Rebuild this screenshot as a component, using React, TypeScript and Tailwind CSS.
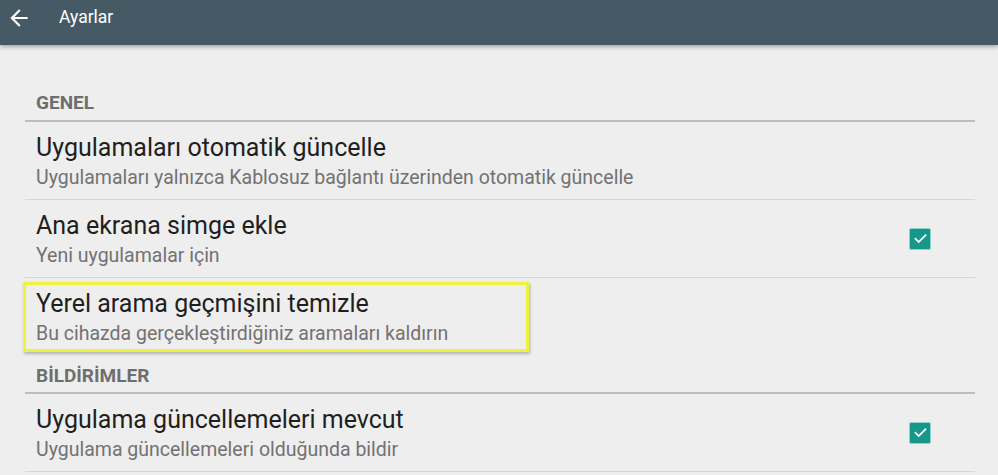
import React from "react";

function Check() {
  return (
    <div className="w-[22px] h-[22px] rounded-[2px] bg-[#17968a] border border-[#8fd0c8] flex items-center justify-center">
      <svg width="17" height="17" viewBox="0 0 24 24">
        <path d="M5 12.5l4.5 4.5L19 7.5" fill="none" stroke="white" strokeWidth="2.6" strokeLinecap="square" />
      </svg>
    </div>
  );
}

function Item({ title, sub, check, divider = true, highlight = false }: { title: string; sub: string; check?: boolean; divider?: boolean; highlight?: boolean }) {
  return (
    <div className={"relative flex items-center " + (divider ? "border-b border-[#d6d6d6]" : "")}>
      <div className="flex-1 pl-[11px] pt-[12px] pb-[10px]">
        <div className="text-[25px] leading-[28px] text-[#1f1f1f]">{title}</div>
        <div className="mt-[5px] text-[19.5px] leading-[22px] text-[#727272]">{sub}</div>
      </div>
      {check && (
        <div className="pr-[44px]">
          <Check />
        </div>
      )}
      {highlight && (
        <div className="absolute left-[-2px] top-[4px] w-[506px] h-[70px] border-[3px] border-[#eef23a] shadow-[1px_2px_3px_rgba(0,0,0,0.25)] pointer-events-none" />
      )}
    </div>
  );
}

function Section({ label, first }: { label: string; first?: boolean }) {
  return (
    <div className={"border-b-2 border-[#bdbdbd] pl-[11px] " + (first ? "pt-[47px] pb-[6px]" : "pt-[10px] pb-[5px]")}>
      <div className="text-[19px] leading-[22px] font-bold text-[#6e6e6e]">{label}</div>
    </div>
  );
}

export default function App() {
  return (
    <div className="w-[998px] h-[475px] overflow-hidden bg-[#eeeeee]" style={{ fontFamily: "Roboto, 'Noto Sans', sans-serif" }}>
      <div className="relative z-10 h-[45px] bg-[#455a64] shadow-[0_2px_4px_rgba(0,0,0,0.3)]">
        <div className="h-[35px] flex items-center">
          <svg className="ml-[6px]" width="26" height="26" viewBox="0 0 24 24">
            <path d="M20 11H7.83l5.59-5.59L12 4l-8 8 8 8 1.41-1.41L7.83 13H20v-2z" fill="white" />
          </svg>
          <span className="ml-[27px] text-[17.5px] text-white">Ayarlar</span>
        </div>
      </div>
      <div className="pl-[25px] pr-[23px]">
        <Section label="GENEL" first />
        <Item title="Uygulamaları otomatik güncelle" sub="Uygulamaları yalnızca Kablosuz bağlantı üzerinden otomatik güncelle" />
        <Item title="Ana ekrana simge ekle" sub="Yeni uygulamalar için" check />
        <Item title="Yerel arama geçmişini temizle" sub="Bu cihazda gerçekleştirdiğiniz aramaları kaldırın" divider={false} highlight />
        <Section label="BİLDİRİMLER" />
        <Item title="Uygulama güncellemeleri mevcut" sub="Uygulama güncellemeleri olduğunda bildir" check />
      </div>
    </div>
  );
}
